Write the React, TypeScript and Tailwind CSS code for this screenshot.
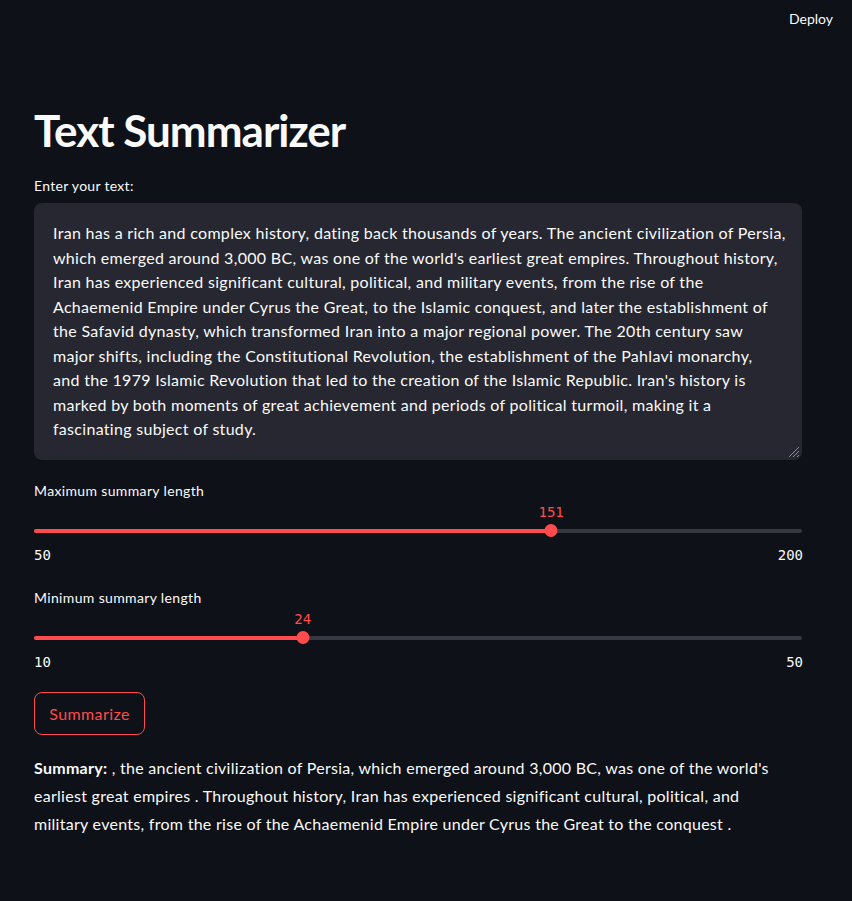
import React from "react";

const inputLines = [
  "Iran has a rich and complex history, dating back thousands of years. The ancient civilization of Persia,",
  "which emerged around 3,000 BC, was one of the world's earliest great empires. Throughout history,",
  "Iran has experienced significant cultural, political, and military events, from the rise of the",
  "Achaemenid Empire under Cyrus the Great, to the Islamic conquest, and later the establishment of",
  "the Safavid dynasty, which transformed Iran into a major regional power. The 20th century saw",
  "major shifts, including the Constitutional Revolution, the establishment of the Pahlavi monarchy,",
  "and the 1979 Islamic Revolution that led to the creation of the Islamic Republic. Iran's history is",
  "marked by both moments of great achievement and periods of political turmoil, making it a",
  "fascinating subject of study.",
];

const Slider = ({
  label,
  min,
  max,
  value,
}: {
  label: string;
  min: number;
  max: number;
  value: number;
}) => {
  const pct = ((value - min) / (max - min)) * 100;
  return (
    <div>
      <div className="h-[20px] text-[14px] leading-[20px] tracking-[0.35px]">{label}</div>
      <div className="relative mt-[1px] h-[64px]">
        <div
          className="absolute top-0 -translate-x-1/2 font-['DejaVu_Sans_Mono',monospace] text-[14px] leading-[20px] text-[#ff4b4b]"
          style={{ left: `${pct}%` }}
        >
          {value}
        </div>
        <div className="absolute top-[27px] h-[4px] w-full rounded-full bg-[#373942]" />
        <div
          className="absolute top-[27px] h-[4px] rounded-full bg-[#ff4b4b]"
          style={{ width: `${pct}%` }}
        />
        <div
          className="absolute top-[22px] h-[13px] w-[13px] -translate-x-1/2 rounded-full bg-[#ff4b4b]"
          style={{ left: `${pct}%` }}
        />
        <div className="absolute top-[43px] flex w-full justify-between font-['DejaVu_Sans_Mono',monospace] text-[14px] leading-[20px] text-[#fafafa]">
          <span>{min}</span>
          <span className="-mr-px">{max}</span>
        </div>
      </div>
    </div>
  );
};

export default function App() {
  return (
    <div className="min-h-[901px] bg-[#0e1117] font-['Lato',sans-serif] text-[#fafafa]">
      <header className="flex h-[36px] items-center justify-end pr-[19px]">
        <span className="text-[14px]">Deploy</span>
      </header>

      <main className="w-[802px] pl-[34px]">
        <h1 className="mt-[68px] text-[44px] font-bold leading-[52px] tracking-[-1px]">
          Text Summarizer
        </h1>

        <div className="mt-[20px] h-[20px] text-[14px] leading-[20px] tracking-[0.3px]">
          Enter your text:
        </div>

        <div className="relative mt-[7px] h-[257px] rounded-[8px] bg-[#262730] px-[19px] pt-[18px] text-[16px] leading-[24.5px] tracking-[0.3px]">
          {inputLines.map((l, i) => (
            <div key={i} className="whitespace-nowrap">
              {l}
            </div>
          ))}
          <svg
            className="absolute bottom-[2px] right-[2px]"
            width="12"
            height="12"
            viewBox="0 0 12 12"
          >
            <path
              d="M11 1 L1 11 M11 5 L5 11 M11 9 L9 11"
              stroke="#8a8b92"
              strokeWidth="1"
            />
          </svg>
        </div>

        <div className="mt-[21px]">
          <Slider label="Maximum summary length" min={50} max={200} value={151} />
        </div>
        <div className="mt-[22px]">
          <Slider label="Minimum summary length" min={10} max={50} value={24} />
        </div>

        <button className="mt-[19px] flex h-[43px] w-[111px] items-center justify-center rounded-[8px] border border-[#ff4b4b] text-[16px] tracking-[0.4px] text-[#ff4b4b]">
          Summarize
        </button>

        <p className="mt-[19px] text-[16px] leading-[28px] tracking-[0.28px]">
          <span className="font-bold">Summary:</span> , the ancient civilization of
          Persia, which emerged around 3,000 BC, was one of the world's
          <br />
          earliest great empires . Throughout history, Iran has experienced
          significant cultural, political, and
          <br />
          military events, from the rise of the Achaemenid Empire under Cyrus the
          Great to the conquest .
        </p>
      </main>
    </div>
  );
}
